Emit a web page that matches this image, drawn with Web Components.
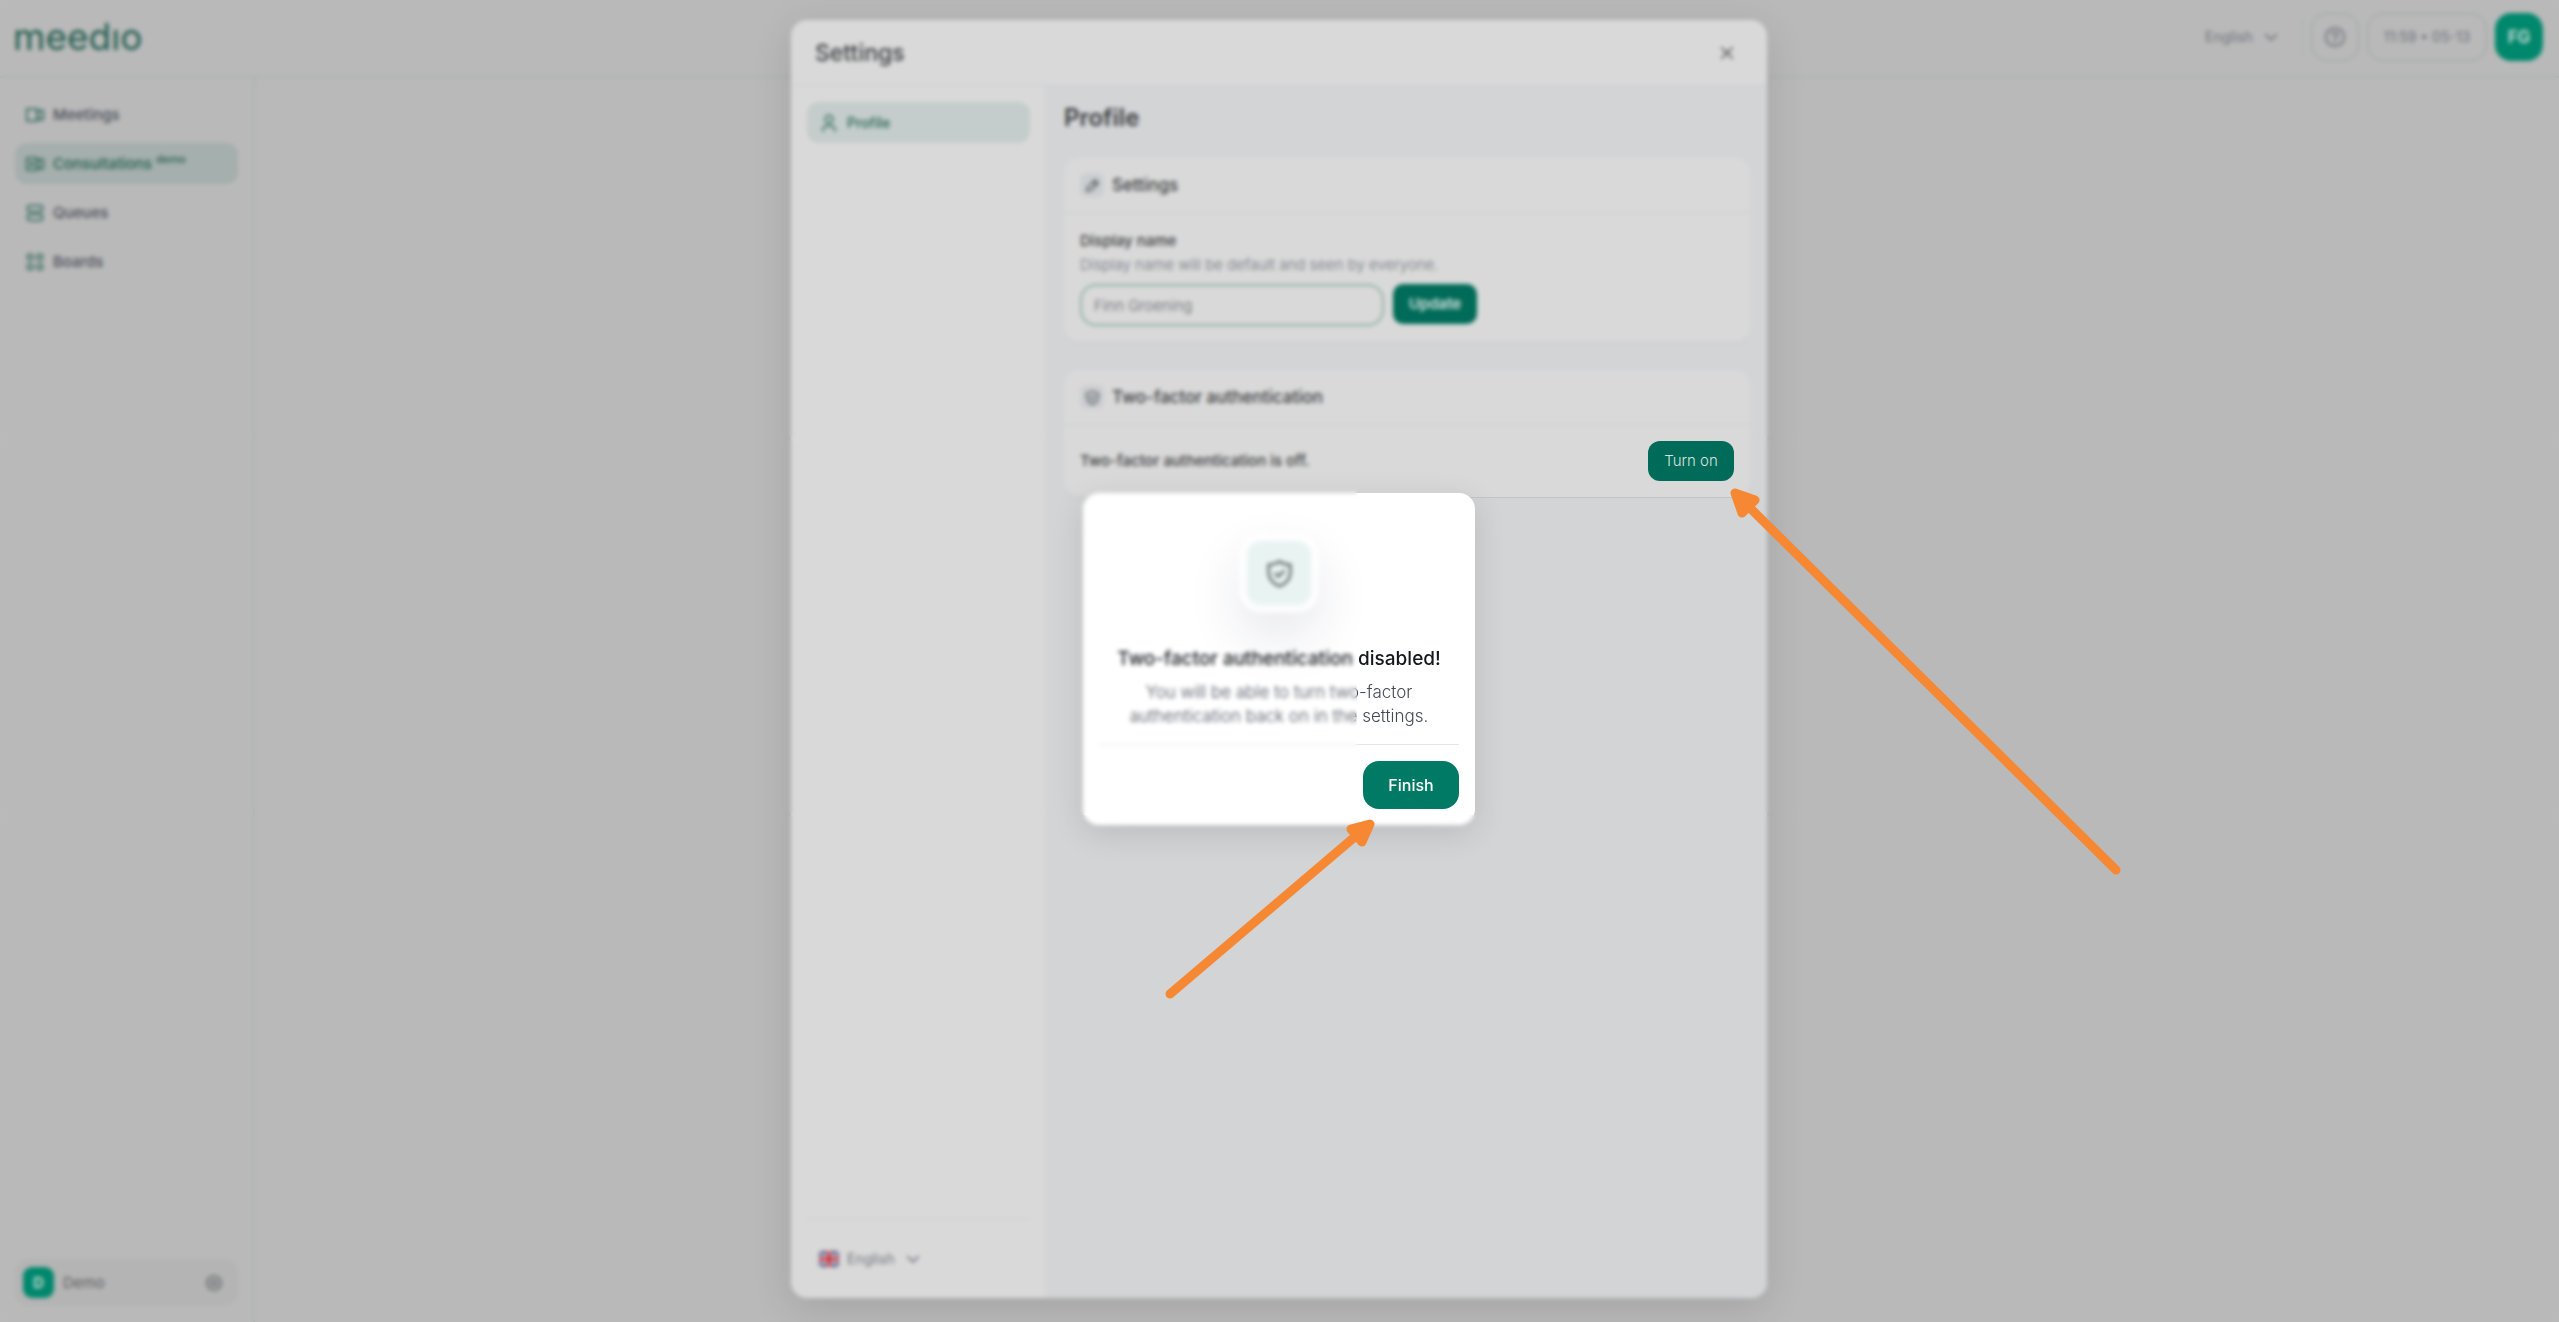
<!DOCTYPE html>
<html lang="en">
<head>
<meta charset="utf-8">
<title>meedio</title>
<style>
  :root {
    --green: #006b58;
    --green-ink: #1f5f4f;
    --avatar: #00886c;
    --page: #b9b9b9;
    --page-line: #adb1b0;
    --surface: #d9d9d9;
    --surface-line: #cbcdce;
    --canvas: #d2d4d6;
    --ink: #3b3d40;
    --muted: #6f747d;
  }

  body {
    margin: 0;
    font-family: Inter, "Open Sans", sans-serif;
    font-size: 15px;
    line-height: 20px;
    color: var(--ink);
  }
</style>
</head>
<body>
<app-shell>
  <top-bar slot="header"></top-bar>
  <nav-item slot="nav" icon="video">Meetings</nav-item>
  <nav-item slot="nav" icon="video-plus" active note="demo">Consultations</nav-item>
  <nav-item slot="nav" icon="rows">Queues</nav-item>
  <nav-item slot="nav" icon="grid">Boards</nav-item>
  <workspace-switch slot="footer"></workspace-switch>
</app-shell>

<settings-window>
  <nav-item slot="nav" icon="user" active wide>Profile</nav-item>
  <settings-card icon="pencil" heading="Settings">
    <name-form></name-form>
  </settings-card>
  <settings-card icon="shield" heading="Two-factor authentication">
    <toggle-row action="Turn on">Two-factor authentication is off.</toggle-row>
  </settings-card>
</settings-window>

<confirm-dialog heading="Two-factor authentication disabled!" action="Finish">
  You will be able to turn two-factor<br>authentication back on in the settings.
</confirm-dialog>

<focus-veil></focus-veil>
<guide-arrows></guide-arrows>

<script>
(function() {
  const ICONS = {
    'video': '<path d="M1 4h14v16H1zM15 9l3-1V6h5v12h-5v-2l-3-1"/>',
    'video-plus': '<path d="M1 4h14v16H1zM15 9l3-1V6h5v12h-5v-2l-3-1M8 9v6M5 12h6"/>',
    'rows': '<rect x="2" y="2" width="20" height="8" rx="3"/><rect x="2" y="14" width="20" height="8" rx="3"/>',
    'grid': '<rect x="2" y="2" width="7" height="7" rx="2"/><rect x="15" y="2" width="7" height="7" rx="2"/><rect x="2" y="15" width="7" height="7" rx="2"/><rect x="15" y="15" width="7" height="7" rx="2"/>',
    'user': '<circle cx="12" cy="7" r="5"/><path d="M4 23v-2a5 5 0 0 1 5-5h6a5 5 0 0 1 5 5v2"/>',
    'gear': '<path d="M12 2l3 2 4 1 1 4 2 3-2 3-1 4-4 1-3 2-3-2-4-1-1-4-2-3 2-3 1-4 4-1z"/><rect x="9" y="9" width="6" height="6" rx="2"/>',
    'help': '<circle cx="12" cy="12" r="10"/><path d="M9 9.500a3 3 0 1 1 4.200 2.700c-.8.4-1.200.9-1.200 1.800M12 16.500v1"/>',
    'chevron': '<path d="M3 8l9 9 9-9"/>',
    'close': '<path d="M4 4l16 16M20 4L4 20"/>',
    'pencil': '<path d="M3 21l1-6L16 3l5 5L9 20zM13 6l5 5"/>',
    'shield': '<path d="M12 2c2.500 1.800 5.500 2.600 9 2.800v6.200c0 5.500-3.500 9.300-9 11.500-5.500-2.200-9-6-9-11.500V4.800c3.500-.2 6.500-1 9-2.800z"/><path d="M8.500 12l2.500 2.500 4.500-4.500"/>',
  };

  // Attaches an open root with the given markup
  const render = (host, html) => {
    if (!host.shadowRoot) {
      host.attachShadow({ mode: 'open' }).innerHTML = html;
    }
  };

  class AppIcon extends HTMLElement {
    connectedCallback() {
      render(this, `
      <style>
        :host { display: inline-flex; flex: none; width: 16px; height: 16px; }
        svg { width: 100%; height: 100%; }
      </style>
      <svg viewBox="0 0 24 24" fill="none" stroke="currentColor" stroke-width="${this.getAttribute('weight') || 2}"
        stroke-linecap="round" stroke-linejoin="round" aria-hidden="true">${ICONS[this.getAttribute('name')]}</svg>
      `);
    }
  }

  class AppShell extends HTMLElement {
    connectedCallback() {
      render(this, `
      <style>
        :host {
          display: grid;
          grid-template: auto 1fr / 255px 1fr;
          min-height: 100vh;
          background: var(--page);
        }
        header { grid-column: 1 / -1; border-bottom: 2px solid var(--page-line); }
        aside {
          display: flex;
          flex-direction: column;
          justify-content: space-between;
          border-right: 2px solid var(--page-line);
          padding: 16px 15px;
        }
        nav { display: flex; flex-direction: column; gap: 8px; }
      </style>
      <header><slot name="header"></slot></header>
      <aside>
        <nav><slot name="nav"></slot></nav>
        <slot name="footer"></slot>
      </aside>
      <main><slot></slot></main>
      `);
    }
  }

  class TopBar extends HTMLElement {
    connectedCallback() {
      render(this, `
      <style>
        :host {
          display: flex;
          align-items: center;
          justify-content: space-between;
          height: 76px;
          padding: 0 16px 0 13px;
          color: var(--muted);
          font-size: 14px;
        }
        .logo {
          margin-bottom: 2px;
          color: #1f5c4d;
          font-size: 37px;
          line-height: 40px;
          font-weight: 400;
          text-decoration: none;
        }
        .tools { display: flex; align-items: center; gap: 8px; margin-bottom: 2px; }
        .line { width: 1px; height: 40px; margin-left: 16px; background: #a9b2b0; }
        button, time {
          box-sizing: border-box;
          display: flex;
          align-items: center;
          justify-content: center;
          height: 48px;
          border: 1px solid #999e9e;
          border-radius: 16px;
          background: none;
          color: inherit;
          font: inherit;
        }
        button { width: 48px; padding: 0; }
        time { width: 120px; white-space: pre; }
        app-icon { width: 22px; height: 22px; }
        .avatar { border: 0; background: var(--avatar); color: #d5dfdc; font-size: 17px; font-weight: 600; }
      </style>
      <a class="logo" href="#" aria-label="meedio">meedıo</a>
      <div class="tools">
        <language-select></language-select>
        <span class="line"></span>
        <button type="button" aria-label="Help"><app-icon name="help"></app-icon></button>
        <time>11:59 • 05-13</time>
        <button type="button" class="avatar">FG</button>
      </div>
      `);
    }
  }

  class LanguageSelect extends HTMLElement {
    connectedCallback() {
      const flag = this.hasAttribute('flag') ? `
        <svg class="flag" viewBox="0 0 20 16" aria-hidden="true">
          <rect width="20" height="16" rx="3" fill="#31366f"/>
          <path d="M1 1l18 14M19 1L1 15" stroke="#d8d8dc" stroke-width="2"/>
          <path d="M10 0v16M0 8h20" stroke="#dcdcdf" stroke-width="6"/>
          <path d="M10 0v16M0 8h20" stroke="#c4202f" stroke-width="3"/>
        </svg>` : '';
      render(this, `
      <style>
        :host { display: inline-flex; align-items: center; gap: 8px; color: var(--muted); font-size: 14px; }
        .flag { width: 20px; height: 16px; }
        select {
          appearance: none;
          border: 0;
          padding: 0;
          background: none;
          color: inherit;
          font: inherit;
        }
        app-icon { width: 14px; height: 14px; margin-left: 3px; }
      </style>
      ${flag}
      <select aria-label="Language"><option>English</option></select>
      <app-icon name="chevron" weight="3"></app-icon>
      `);
    }
  }

  class NavItem extends HTMLElement {
    connectedCallback() {
      const note = this.getAttribute('note');
      render(this, `
      <style>
        :host { display: block; }
        a {
          display: flex;
          align-items: center;
          gap: 9px;
          height: 41px;
          padding: 0 11px;
          border-radius: 12px;
          color: #4b4e59;
          font-weight: 500;
          text-decoration: none;
        }
        app-icon { width: 18px; height: 18px; color: var(--green-ink); }
        :host([active]) a { background: #a5afad; color: var(--green-ink); }
        :host([wide]) a { padding: 0 13px; background: #c4cdcb; font-size: 14px; }
        sup { margin-left: 4px; font-size: 11px; line-height: 11px; }
      </style>
      <a href="#">
        <app-icon name="${this.getAttribute('icon')}"></app-icon>
        <span><slot></slot>${note ? `<sup>${note}</sup>` : ''}</span>
      </a>
      `);
    }
  }

  class WorkspaceSwitch extends HTMLElement {
    connectedCallback() {
      render(this, `
      <style>
        :host {
          display: flex;
          align-items: center;
          gap: 9px;
          height: 47px;
          padding: 0 15px 0 8px;
          border-radius: 14px;
          background: #b4b4b4;
          color: #5c5e61;
        }
        .badge {
          display: grid;
          place-items: center;
          width: 31px;
          height: 31px;
          border-radius: 9px;
          background: var(--avatar);
          color: #d5dfdc;
          font-weight: 600;
        }
        button { display: flex; margin-left: auto; border: 0; padding: 0; background: none; color: inherit; }
        app-icon { width: 18px; height: 18px; }
      </style>
      <span class="badge">D</span>
      <span>Demo</span>
      <button type="button" aria-label="Workspace settings"><app-icon name="gear"></app-icon></button>
      `);
    }
  }

  class SettingsWindow extends HTMLElement {
    connectedCallback() {
      render(this, `
      <style>
        :host {
          position: fixed;
          inset: 0;
          box-sizing: border-box;
          display: flex;
          justify-content: center;
          padding: 20px 25px 24px 24px;
        }
        section {
          display: grid;
          grid-template: auto 1fr / 254px 1fr;
          width: 976px;
          border-radius: 16px;
          background: var(--surface);
          box-shadow: 0 10px 40px rgba(0, 0, 0, .12);
          overflow: hidden;
        }
        header {
          grid-column: 1 / -1;
          display: flex;
          align-items: center;
          justify-content: space-between;
          height: 65px;
          padding: 0 32px 0 24px;
          border-bottom: 1px solid var(--surface-line);
        }
        h1, h2 { margin: 0; }
        h1 { font-size: 23px; line-height: 28px; font-weight: 500; }
        h2 { font-size: 24px; line-height: 32px; font-weight: 600; margin-bottom: -4px; }
        header button { display: flex; border: 0; padding: 0; background: none; color: inherit; }
        aside { display: flex; flex-direction: column; justify-content: space-between; padding: 16px 15px 0 16px; }
        footer { display: flex; align-items: center; height: 79px; padding-left: 12px; border-top: 1px solid var(--surface-line); }
        main { display: flex; flex-direction: column; gap: 28px; padding: 16px 17px 16px 19px; background: var(--canvas); }
      </style>
      <section role="dialog" aria-labelledby="title">
        <header>
          <h1 id="title">Settings</h1>
          <button type="button" aria-label="Close"><app-icon name="close"></app-icon></button>
        </header>
        <aside>
          <nav><slot name="nav"></slot></nav>
          <footer><language-select flag></language-select></footer>
        </aside>
        <main>
          <h2>Profile</h2>
          <slot></slot>
        </main>
      </section>
      `);
    }
  }

  class SettingsCard extends HTMLElement {
    connectedCallback() {
      render(this, `
      <style>
        :host {
          display: block;
          border-radius: 14px;
          background: var(--surface);
          box-shadow: 0 1px 0 #c3c6c9;
        }
        header {
          box-sizing: border-box;
          display: flex;
          align-items: center;
          gap: 8px;
          height: 55px;
          padding: 0 16px;
          border-bottom: 1px solid var(--surface-line);
        }
        .mark { display: grid; place-items: center; width: 24px; height: 24px; border-radius: 6px; background: #cbced1; }
        app-icon { width: 15px; height: 15px; }
        h3 { margin: 0; font-size: 17px; line-height: 24px; font-weight: 500; }
        .body { padding: 16px; }
      </style>
      <header>
        <span class="mark"><app-icon name="${this.getAttribute('icon')}"></app-icon></span>
        <h3>${this.getAttribute('heading')}</h3>
      </header>
      <div class="body"><slot></slot></div>
      `);
    }
  }

  class NameForm extends HTMLElement {
    connectedCallback() {
      render(this, `
      <style>
        :host { display: block; }
        label { display: block; font-weight: 500; line-height: 24px; }
        p { margin: 0 0 7px; line-height: 24px; font-weight: 300; color: var(--muted); }
        form { display: flex; gap: 9px; }
        input {
          box-sizing: border-box;
          width: 304px;
          height: 42px;
          border: 2px solid #8fb0a6;
          border-radius: 16px;
          padding: 0 12px;
          background: none;
          color: #63666a;
          font: inherit;
          font-weight: 300;
        }
        button {
          height: 40px;
          width: 84px;
          border: 0;
          border-radius: 10px;
          background: var(--green);
          color: #d9e2e0;
          font: inherit;
          font-weight: 600;
        }
      </style>
      <label for="name">Display name</label>
      <p>Display name will be default and seen by everyone.</p>
      <form>
        <input id="name" type="text" value="Finn Groening">
        <button type="button">Update</button>
      </form>
      `);
    }
  }

  class ToggleRow extends HTMLElement {
    connectedCallback() {
      render(this, `
      <style>
        :host { display: flex; align-items: center; justify-content: space-between; font-weight: 500; }
        button {
          width: 86px;
          height: 40px;
          border: 0;
          border-radius: 12px;
          background: var(--green);
          color: #d9e2e0;
          font: inherit;
          font-weight: 300;
        }
      </style>
      <span><slot></slot></span>
      <button type="button">${this.getAttribute('action')}</button>
      `);
    }
  }

  class ConfirmDialog extends HTMLElement {
    connectedCallback() {
      render(this, `
      <style>
        :host {
          position: fixed;
          inset: 0 1px 4px 0;
          display: grid;
          place-items: center;
        }
        section {
          box-sizing: border-box;
          width: 392px;
          padding: 48px 16px 16px;
          border-radius: 16px;
          background: #fff;
          box-shadow: 0 8px 32px rgba(0, 0, 0, .12);
          text-align: center;
        }
        .mark {
          display: grid;
          place-items: center;
          width: 64px;
          height: 64px;
          margin: 0 auto 40px;
          border-radius: 14px;
          background: #e9f4f2;
          box-shadow: 0 0 0 8px rgba(255, 255, 255, .8), 0 24px 60px rgba(30, 40, 80, .16);
          color: #5c6462;
        }
        app-icon { width: 29px; height: 29px; }
        h2 { margin: 0 0 8px; font-size: 19px; line-height: 27px; font-weight: 500; color: #14171c; white-space: nowrap; }
        p { margin: 0 0 16px; font-size: 17px; line-height: 24px; font-weight: 300; color: #434a57; white-space: nowrap; }
        footer { display: flex; justify-content: flex-end; padding-top: 16px; border-top: 1px solid #e5e6e8; }
        button {
          width: 96px;
          height: 48px;
          border: 0;
          border-radius: 16px;
          background: #007a64;
          color: #fff;
          font: inherit;
          font-size: 16px;
          font-weight: 500;
        }
      </style>
      <section role="alertdialog" aria-labelledby="title">
        <div class="mark"><app-icon name="shield"></app-icon></div>
        <h2 id="title">${this.getAttribute('heading')}</h2>
        <p><slot></slot></p>
        <footer><button type="button">${this.getAttribute('action')}</button></footer>
      </section>
      `);
    }
  }

  class FocusVeil extends HTMLElement {
    connectedCallback() {
      render(this, `
      <style>
        :host {
          position: fixed;
          inset: 0;
          display: grid;
          grid-template: 440px 375px 1fr / calc(50% + 77px) 380px 1fr;
          pointer-events: none;
        }
        div { backdrop-filter: blur(2px); }
        .wide { grid-column: 1 / -1; }
        .right { grid-column: 3; }
      </style>
      <div class="wide"></div>
      <div></div>
      <div class="right"></div>
      <div class="wide"></div>
      `);
    }
  }

  class GuideArrows extends HTMLElement {
    connectedCallback() {
      render(this, `
      <style>
        :host { position: fixed; inset: 0; pointer-events: none; }
        svg { display: block; width: 100%; height: 100%; }
      </style>
      <svg viewBox="0 0 2559 1322" fill="#f68733" stroke="#f68733" stroke-width="9" stroke-linecap="round" stroke-linejoin="round" aria-hidden="true">
        <path d="M2116 870L1741 499M1735 493l20 7-13 13z"/>
        <path d="M1170 994l194-165M1370 824l-19 5 11 13z"/>
      </svg>
      `);
    }
  }

  customElements.define('app-icon', AppIcon);
  customElements.define('app-shell', AppShell);
  customElements.define('top-bar', TopBar);
  customElements.define('language-select', LanguageSelect);
  customElements.define('nav-item', NavItem);
  customElements.define('workspace-switch', WorkspaceSwitch);
  customElements.define('settings-window', SettingsWindow);
  customElements.define('settings-card', SettingsCard);
  customElements.define('name-form', NameForm);
  customElements.define('toggle-row', ToggleRow);
  customElements.define('confirm-dialog', ConfirmDialog);
  customElements.define('focus-veil', FocusVeil);
  customElements.define('guide-arrows', GuideArrows);
})();
</script>
</body>
</html>
